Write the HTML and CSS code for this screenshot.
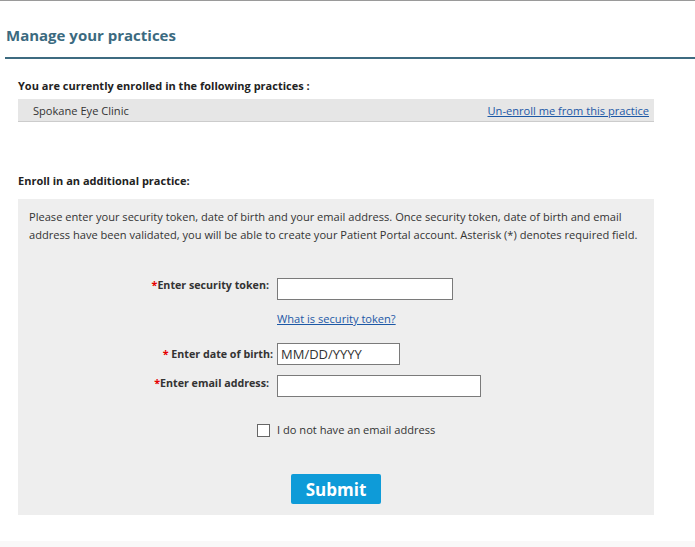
FILE: index.html
```html
<!DOCTYPE html>
<html>
<head>
<meta charset="utf-8">
<link rel="stylesheet" href="styles.css">
</head>
<body>
<div class="page">
  <h1 class="title">Manage your practices</h1>
  <div class="content">
    <div class="section-label">You are currently enrolled in the following practices :</div>
    <div class="practice-row">
      <span class="practice-name">Spokane Eye Clinic</span>
      <a class="link" href="#">Un-enroll me from this practice</a>
    </div>
    <div class="section-label enroll-label">Enroll in an additional practice:</div>
    <div class="enroll-box">
      <p class="intro">Please enter your security token, date of birth and your email address. Once security token, date of birth and email address have been validated, you will be able to create your Patient Portal account. Asterisk (*) denotes required field.</p>
      <div class="form-row row-token">
        <label class="field-label pad"><span class="req">*</span>Enter security token:</label>
        <input class="field field-token" type="text">
      </div>
      <div class="form-row row-link">
        <span class="field-label"></span>
        <a class="link" href="#">What is security token?</a>
      </div>
      <div class="form-row row-dob">
        <label class="field-label"><span class="req">*</span> Enter date of birth:</label>
        <input class="field field-dob" type="text" value="MM/DD/YYYY">
      </div>
      <div class="form-row row-email">
        <label class="field-label pad"><span class="req">*</span>Enter email address:</label>
        <input class="field field-email" type="text">
      </div>
      <div class="check-row">
        <span class="checkbox"></span>
        <span class="check-text">I do not have an email address</span>
      </div>
      <div class="button-row">
        <button class="submit" type="button">Submit</button>
      </div>
    </div>
  </div>
  <div class="footer-strip"></div>
</div>
</body>
</html>
```
FILE: styles.css
```css
html, body {
  margin: 0;
  padding: 0;
  background: #ffffff;
}
body {
  font-family: "Open Sans", "Noto Sans", sans-serif;
  font-size: 11.1px;
  color: #333333;
}
.page {
  border-top: 1px solid #9a9a9a;
  height: 546px;
  display: flex;
  flex-direction: column;
}
.title {
  margin: 0 0 0 5px;
  padding: 25px 0 13px 1px;
  font-size: 15px;
  line-height: 18px;
  font-weight: 700;
  color: #3b6a80;
  border-bottom: 2px solid #3d6b80;
}
.content {
  margin-left: 18px;
  width: 636px;
}
.section-label {
  font-weight: 700;
  font-size: 11px;
  color: #222222;
  line-height: 18px;
  margin-top: 18px;
}
.practice-row {
  margin-top: 4px;
  height: 22px;
  background: #e6e6e6;
  border-bottom: 1px solid #cccccc;
  display: flex;
  align-items: center;
  justify-content: space-between;
  padding: 0 5px 0 15px;
}
.practice-name {
  color: #333333;
}
.link {
  color: #1c58a6;
  text-decoration: underline;
}
.enroll-label {
  margin-top: 50px;
}
.enroll-box {
  margin-top: 9px;
  background: #eeeeee;
  padding: 9px 11px 11px 11px;
}
.intro {
  margin: 0;
  line-height: 18px;
  color: #333333;
}
.form-row {
  display: flex;
  align-items: flex-start;
}
.field-label {
  width: 244px;
  flex: none;
  text-align: right;
  font-weight: 700;
  font-size: 10.7px;
  color: #333333;
  line-height: 18px;
  margin-right: 4px;
}
.field-label.pad {
  width: 240px;
  margin-right: 8px;
}
.req {
  color: #e60000;
}
.row-token {
  margin-top: 34px;
}
.row-token .field-label {
  margin-top: -2px;
}
.row-link {
  margin-top: 10px;
  line-height: 18px;
}
.row-dob {
  margin-top: 15px;
}
.row-dob .field-label {
  padding-top: 2px;
}
.row-email {
  margin-top: 10px;
}
.row-email .field-label {
  margin-top: -1px;
}
.field {
  box-sizing: border-box;
  height: 22px;
  border: 1px solid #7a7a7a;
  background: #ffffff;
  margin: 0;
  padding: 0 3px;
  font-family: "Open Sans", "Noto Sans", sans-serif;
  font-size: 13px;
  color: #333333;
  outline: none;
}
.field-token { width: 176px; }
.field-dob { width: 123px; }
.field-email { width: 204px; }
.check-row {
  margin-top: 24px;
  display: flex;
  align-items: center;
  padding-left: 228px;
  line-height: 18px;
}
.checkbox {
  box-sizing: border-box;
  width: 13px;
  height: 13px;
  border: 1px solid #666666;
  background: #ffffff;
  margin-right: 7px;
}
.check-text {
  color: #333333;
}
.button-row {
  margin-top: 35px;
  padding-left: 262px;
}
.submit {
  width: 90px;
  height: 30px;
  border: none;
  border-radius: 2px;
  background: #0e9bd8;
  color: #ffffff;
  font-family: "Open Sans", "Noto Sans", sans-serif;
  font-size: 17px;
  font-weight: 700;
  padding: 0;
  display: block;
}
.footer-strip {
  margin-top: auto;
  height: 6px;
  background: #f9f8f8;
}
```
